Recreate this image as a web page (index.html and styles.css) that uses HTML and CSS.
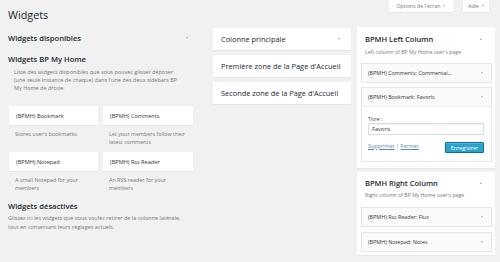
FILE: index.html
```html
<!DOCTYPE html>
<html lang="fr">
<head>
<meta charset="utf-8">
<title>Widgets</title>
<link rel="stylesheet" href="styles.css">
</head>
<body>
<div class="wrap">
  <div class="topbar">
    <h1 class="page-title">Widgets</h1>
    <div class="meta-links">
      <span class="meta-btn">Options de l'écran <i class="tri-down"></i></span>
      <span class="meta-btn">Aide <i class="tri-down"></i></span>
    </div>
  </div>
  <div class="columns">
    <div class="col-left">
      <div class="left-head">
        <span>Widgets disponibles</span>
        <i class="tri-down"></i>
      </div>
      <h3 class="sec-title">Widgets BP My Home</h3>
      <p class="sec-desc">Liste des widgets disponibles que vous pouvez glisser déposer (une seule instance de chaque) dans l'une des deux sidebars BP My Home de droite.</p>
      <div class="cards">
        <div class="card-cell">
          <div class="card">(BPMH) Bookmark</div>
          <p class="card-desc">Stores user's bookmarks</p>
        </div>
        <div class="card-cell">
          <div class="card">(BPMH) Comments</div>
          <p class="card-desc">Let your members follow their latest comments</p>
        </div>
        <div class="card-cell">
          <div class="card">(BPMH) Notepad</div>
          <p class="card-desc">A small Notepad for your members</p>
        </div>
        <div class="card-cell">
          <div class="card">(BPMH) Rss Reader</div>
          <p class="card-desc">An RSS reader for your members</p>
        </div>
      </div>
      <h3 class="sec-title inactive-title">Widgets désactivés</h3>
      <p class="inactive-desc">Glissez ici les widgets que vous voulez retirer de la colonne latérale, tout en conservant leurs réglages actuels.</p>
    </div>

    <div class="col-mid">
      <div class="zone"><span>Colonne principale</span><i class="tri-down"></i></div>
      <div class="zone"><span>Première zone de la Page d'Accueil</span></div>
      <div class="zone"><span>Seconde zone de la Page d'Accueil</span></div>
    </div>

    <div class="col-right">
      <div class="panel panel-left">
        <div class="panel-title"><span>BPMH Left Column</span><i class="tri-up"></i></div>
        <p class="panel-desc">Left column of BP My Home user's page</p>
        <div class="widget">
          <div class="widget-head"><span>(BPMH) Comments: Commentai...</span><i class="tri-down"></i></div>
        </div>
        <div class="widget open">
          <div class="widget-head"><span>(BPMH) Bookmark: Favoris</span><i class="tri-down"></i></div>
          <div class="widget-body">
            <label class="field-label">Titre :</label>
            <div class="field-input">Favoris</div>
            <div class="widget-actions">
              <span class="links"><span class="lnk">Supprimer</span> | <span class="lnk">Fermer</span></span>
              <span class="save-btn">Enregistrer</span>
            </div>
          </div>
        </div>
      </div>
      <div class="panel panel-right">
        <div class="panel-title"><span>BPMH Right Column</span><i class="tri-up"></i></div>
        <p class="panel-desc">Right column of BP My Home user's page</p>
        <div class="widget">
          <div class="widget-head"><span>(BPMH) Rss Reader: Flux</span><i class="tri-down"></i></div>
        </div>
        <div class="widget">
          <div class="widget-head"><span>(BPMH) Notepad: Notes</span><i class="tri-down"></i></div>
        </div>
      </div>
    </div>
  </div>
</div>
</body>
</html>
```
FILE: styles.css
```css
* { box-sizing: border-box; }
html, body {
  margin: 0;
  padding: 0;
  background: #f1f1f1;
  font-family: "Open Sans", "Liberation Sans", sans-serif;
  color: #23282d;
}
.wrap {
  width: 500px;
  height: 262px;
  padding-left: 8px;
  overflow: hidden;
}
.topbar {
  display: flex;
  justify-content: space-between;
  align-items: flex-start;
  height: 28px;
}
.page-title {
  margin: 9px 0 0 0;
  font-size: 10.8px;
  line-height: 12px;
  font-weight: 400;
  color: #23282d;
}
.meta-links {
  display: flex;
  gap: 10px;
  margin-right: 11px;
}
.meta-btn {
  display: flex;
  align-items: center;
  gap: 3px;
  height: 12px;
  padding: 0 6px;
  background: #fff;
  font-size: 5.2px;
  color: #777;
  box-shadow: 0 1px 1px rgba(0,0,0,.04);
}
.meta-btn:first-child { width: 64px; justify-content: center; }
.meta-btn:last-child { width: 26px; justify-content: center; }

.tri-down, .tri-up {
  display: inline-block;
  width: 0;
  height: 0;
  border-left: 1.5px solid transparent;
  border-right: 1.5px solid transparent;
}
.tri-down { border-top: 2px solid #aaa; }
.tri-up { border-bottom: 2px solid #aaa; }

.columns {
  display: flex;
  align-items: flex-start;
}
.col-left { width: 185px; }
.col-mid { width: 138px; margin-left: 20px; }
.col-right { width: 138px; margin-left: 6px; }

/* left column */
.left-head {
  display: flex;
  justify-content: space-between;
  align-items: center;
  height: 20px;
  padding-right: 5px;
  font-size: 7.6px;
  font-weight: 600;
  color: #23282d;
}
.sec-title {
  margin: 6px 0 0 0;
  font-size: 7.6px;
  line-height: 10px;
  font-weight: 600;
  color: #23282d;
}
.sec-desc {
  margin: 4px 0 0 0;
  padding-left: 6px;
  padding-right: 9px;
  font-size: 5.5px;
  line-height: 8px;
  color: #777;
}
.cards {
  display: grid;
  grid-template-columns: 89px 90px;
  column-gap: 5px;
  margin-top: 14px;
  margin-left: 1px;
}
.card-cell { margin-bottom: 6px; }
.card-cell:nth-child(n+3) { margin-bottom: 0; }
.card {
  height: 19px;
  display: flex;
  align-items: center;
  padding-left: 7px;
  background: #fff;
  font-size: 5.6px;
  font-weight: 500;
  color: #333;
  box-shadow: 0 1px 1px rgba(0,0,0,.04);
}
.card-desc {
  margin: 5px 0 0 0;
  padding-left: 6px;
  padding-right: 6px;
  font-size: 5.4px;
  line-height: 8px;
  color: #777;
}
.inactive-title { margin-top: 9px; }
.inactive-desc {
  margin: 3px 0 0 0;
  padding-right: 6px;
  font-size: 5.5px;
  line-height: 8.8px;
  color: #777;
}

/* middle column */
.zone {
  display: flex;
  justify-content: space-between;
  align-items: center;
  height: 22px;
  margin-bottom: 5px;
  padding: 0 11px 0 8px;
  background: #fff;
  font-size: 7.4px;
  font-weight: 500;
  color: #23282d;
  box-shadow: 0 1px 1px rgba(0,0,0,.04);
  white-space: nowrap;
}

/* right column */
.panel {
  background: #fff;
  padding: 0 3px 0 4px;
  box-shadow: 0 1px 1px rgba(0,0,0,.04);
}
.panel-left { margin-top: -1px; padding-top: 7px; padding-bottom: 6px; }
.panel-right { margin-top: 4px; padding-top: 6px; padding-bottom: 3px; }
.panel-title {
  display: flex;
  justify-content: space-between;
  align-items: center;
  height: 10px;
  padding: 0 10px 0 4px;
  font-size: 7.5px;
  font-weight: 600;
  color: #23282d;
}
.panel-desc {
  margin: 4px 0 0 0;
  padding-left: 4px;
  font-size: 5.2px;
  line-height: 8px;
  color: #777;
}
.panel-right .panel-desc { margin-top: 3px; }
.widget {
  margin-top: 7px;
  border: 1px solid #e5e5e5;
  background: #fafafa;
}
.panel-left .widget + .widget { margin-top: 4px; }
.panel-right .widget { margin-top: 8px; }
.panel-right .widget + .widget { margin-top: 5px; }
.widget-head {
  display: flex;
  justify-content: space-between;
  align-items: center;
  height: 18px;
  padding: 0 8px 0 6px;
  font-size: 5.4px;
  font-weight: 500;
  color: #333;
  white-space: nowrap;
}
.widget-body {
  background: #fff;
  border-top: 1px solid #eee;
  padding: 8px 7px 8px 6px;
}
.field-label {
  display: block;
  font-size: 5.4px;
  line-height: 8px;
  color: #444;
}
.field-input {
  height: 12px;
  border: 1px solid #ddd;
  box-shadow: inset 0 1px 1px rgba(0,0,0,.06);
  padding-left: 3px;
  display: flex;
  align-items: center;
  font-size: 5.6px;
  color: #333;
}
.widget-actions {
  display: flex;
  justify-content: space-between;
  align-items: center;
  margin-top: 7px;
}
.links {
  font-size: 5.4px;
  color: #888;
  margin-top: -4px;
}
.lnk {
  color: #5a8ab0;
  text-decoration: underline;
}
.save-btn {
  display: flex;
  align-items: center;
  justify-content: center;
  width: 39px;
  height: 11px;
  background: #2ea2cc;
  border: 1px solid #0074a2;
  border-radius: 1px;
  color: #fff;
  font-size: 5.3px;
  box-shadow: inset 0 1px 0 rgba(120,200,230,.5);
}
```
